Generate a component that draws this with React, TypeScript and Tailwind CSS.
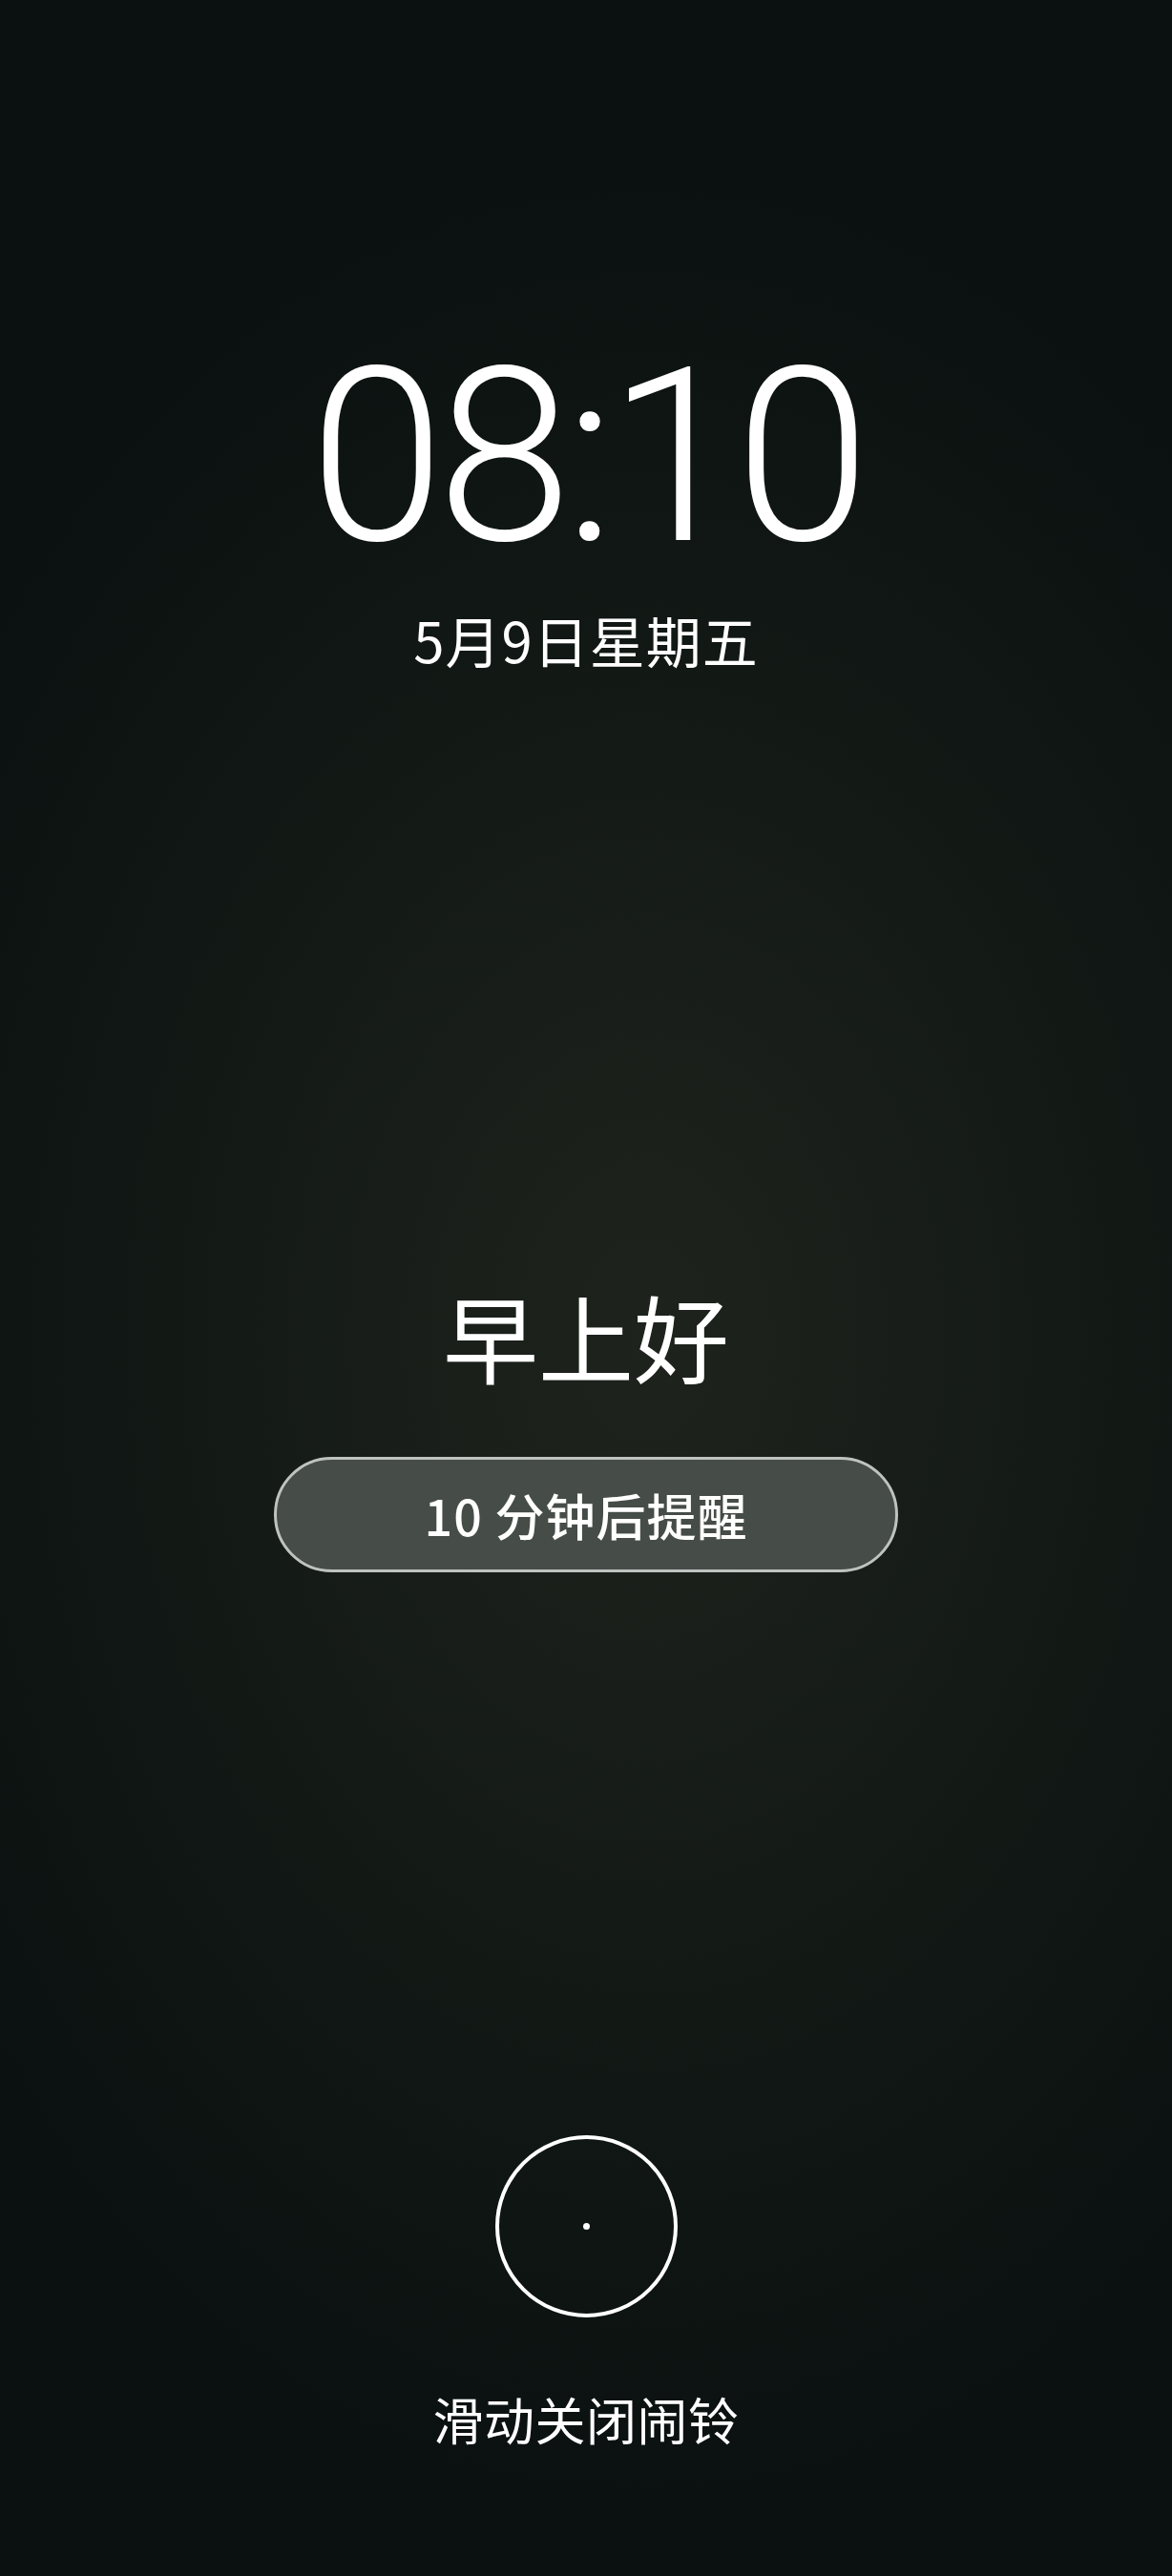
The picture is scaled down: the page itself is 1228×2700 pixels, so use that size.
export default function App() {
    return (
        <main className="min-h-[2700px] w-full flex flex-col items-center text-white bg-[#0a1110] bg-[radial-gradient(ellipse_70%_45%_at_55%_52%,#1e231d_0%,#141a16_50%,#0a1110_100%)] font-['Noto_Sans_CJK_SC',sans-serif]">

            {/* Clock */}
            <div className="mt-[351px] text-[255px] leading-none font-light tracking-[-8px] font-['Roboto','Noto_Sans_CJK_SC',sans-serif]">
                08:10
            </div>
            <div className="mt-[35px] text-[58px] leading-none tracking-[1px]">5月9日星期五</div>

            {/* Greeting + snooze */}
            <div className="mt-[651px] text-[100px] leading-none">早上好</div>
            <button className="mt-[77px] w-[654px] h-[121px] rounded-full border-[3px] border-[#bfc3bf] bg-[#464c48] text-[52px] leading-none font-medium tracking-[1px] text-white">
                10 分钟后提醒
            </button>

            {/* Slide to dismiss */}
            <div className="mt-[590px] w-[191px] h-[191px] rounded-full border-4 border-white flex items-center justify-center">
                <div className="w-[7px] h-[7px] rounded-full bg-white" />
            </div>
            <div className="mt-[80px] text-[53px] leading-none tracking-[0.5px]">滑动关闭闹铃</div>
        </main>
    );
}
